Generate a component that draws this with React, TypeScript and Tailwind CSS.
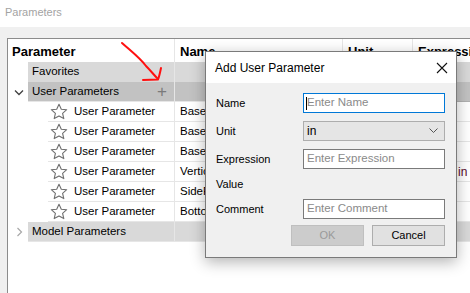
import React from 'react';

const font = { fontFamily: '"Liberation Sans", Arial, sans-serif' };

function Star() {
  return (
    <svg width="18" height="17" viewBox="0 0 18 17" className="shrink-0">
      <path
        d="M9 1.2l2.3 5 5.4.5-4.1 3.6 1.2 5.3L9 12.9l-4.8 2.7 1.2-5.3L1.3 6.7l5.4-.5z"
        fill="none"
        stroke="#6e6e6e"
        strokeWidth="1.1"
        strokeLinejoin="round"
      />
    </svg>
  );
}

const children = [
  { name: 'BasePlate', expr: '' },
  { name: 'BaseFlange', expr: '' },
  { name: 'BaseFoot', expr: '' },
  { name: 'VerticalRail', expr: 'in' },
  { name: 'SidePanel', expr: '' },
  { name: 'BottomPlate', expr: '' },
];

function GroupRow({ label, bg, open, plus }: { label: string; bg: string; open?: boolean; plus?: boolean }) {
  return (
    <div className="flex h-[20px]">
      <div className="w-[20px] flex items-center justify-center pl-[2px]">
        {open ? (
          <svg width="10" height="7" viewBox="0 0 10 7"><path d="M1 1.5l4 4 4-4" fill="none" stroke="#404040" strokeWidth="1.3" /></svg>
        ) : (
          <svg width="7" height="10" viewBox="0 0 7 10"><path d="M1.5 1l4 4-4 4" fill="none" stroke="#a8a8a8" strokeWidth="1.2" /></svg>
        )}
      </div>
      <div className={`w-[147px] flex items-center pl-[4px] pr-[7px] border-r border-[#e6e6e6] border-b ${bg}`}>
        <span className="flex-1 text-[11.5px] text-black">{label}</span>
        {plus && <span className="text-[17px] leading-none text-[#7a7a7a] font-light">+</span>}
      </div>
      <div className={`w-[168px] border-r border-[#e6e6e6] border-b ${bg}`} />
      <div className={`w-[70px] border-r border-[#e6e6e6] border-b ${bg}`} />
      <div className={`flex-1 border-b ${bg}`} />
    </div>
  );
}

export default function App() {
  return (
    <div className="relative w-[470px] h-[293px] overflow-hidden bg-white flex flex-col" style={font}>
      <div className="h-[27px] pl-[5px] pt-[4px] text-[11px] text-[#a3a3a3]">Parameters</div>
      <div className="flex-1 bg-[#f0f0f0] pt-[11px] pl-[7px] flex flex-col">
        <div className="flex-1 bg-white border-l border-t border-[#8c8c8c]">
          <div className="flex h-[23px] text-[13px] font-bold text-black">
            <div className="w-[167px] pl-[4px] pt-[3px] border-r border-[#e6e6e6]">Parameter</div>
            <div className="w-[168px] pl-[5px] pt-[3px] border-r border-[#e6e6e6]">Name</div>
            <div className="w-[70px] pl-[5px] pt-[3px] border-r border-[#e6e6e6]">Unit</div>
            <div className="flex-1 pl-[5px] pt-[3px] whitespace-nowrap overflow-hidden">Expression</div>
          </div>
          <div className="flex h-[20px]">
            <div className="w-[20px]" />
            <div className="flex-1">
              <div className="flex h-[20px] bg-[#d9d9d9]">
                <div className="w-[147px] flex items-center pl-[4px] border-r border-[#e6e6e6] text-[11.5px]">Favorites</div>
                <div className="w-[168px] border-r border-[#e6e6e6]" />
                <div className="w-[70px] border-r border-[#e6e6e6]" />
                <div className="flex-1" />
              </div>
            </div>
          </div>
          <GroupRow label="User Parameters" bg="bg-[#c2c2c2] border-[#b0b0b0]" open plus />
          {children.map((c) => (
            <div key={c.name} className="flex h-[20px]">
              <div className="w-[40px]" />
              <div className="w-[127px] flex items-center gap-[6px] pl-[2px] border-r border-b border-[#e6e6e6]">
                <Star />
                <span className="text-[11.5px] text-black">User Parameter</span>
              </div>
              <div className="w-[168px] flex items-center pl-[5px] border-r border-b border-[#e6e6e6] text-[11.5px] text-black whitespace-nowrap overflow-hidden">
                {c.name}
              </div>
              <div className="w-[70px] border-r border-b border-[#e6e6e6]" />
              <div className="flex-1 flex items-center pl-[45px] border-b border-[#e6e6e6] text-[12px] text-[#5a0a2a]">{c.expr}</div>
            </div>
          ))}
          <GroupRow label="Model Parameters" bg="bg-[#d9d9d9] border-[#e6e6e6]" />
        </div>
      </div>

      <svg className="absolute left-0 top-0 pointer-events-none" width="470" height="293">
        <path d="M122 43 C132 52 140 58 146 66 C151 71 154 75 158 79" fill="none" stroke="#ff1010" strokeWidth="2" strokeLinecap="round" />
        <path d="M143 80 L158 79.5 M161 68 C160 73 159 77 158 79.5" fill="none" stroke="#ff1010" strokeWidth="2" strokeLinecap="round" />
      </svg>

      <div className="absolute left-[205px] top-[51px] w-[252px] h-[207px] border border-[#7a7a7a] bg-[#f0f0f0] shadow-[0_4px_14px_rgba(0,0,0,0.3)] flex flex-col">
        <div className="h-[31px] bg-white flex items-center pl-[9px] pr-[8px]">
          <span className="flex-1 text-[12px] text-black">Add User Parameter</span>
          <svg width="12" height="12" viewBox="0 0 12 12"><path d="M1 1l10 10M11 1L1 11" stroke="#111" strokeWidth="1.1" /></svg>
        </div>
        <div className="flex flex-col pl-[10px] pr-[11px] pt-[10px] text-[11px] text-black">
          <div className="flex items-center h-[20px]">
            <span className="w-[87px]">Name</span>
            <div className="flex-1 h-[20px] border border-[#0078d7] bg-white flex items-center pl-[2px] text-[11.5px]">
              <span className="w-px h-[13px] bg-black" />
              <span className="text-[#8a8a8a]">Enter Name</span>
            </div>
          </div>
          <div className="flex items-center h-[20px] mt-[8px]">
            <span className="w-[87px]">Unit</span>
            <div className="flex-1 h-[20px] border border-[#adadad] bg-[#e5e5e5] flex items-center pl-[3px] pr-[6px] text-[12px]">
              <span className="flex-1">in</span>
              <svg width="9" height="6" viewBox="0 0 9 6"><path d="M0.5 0.5l4 4 4-4" fill="none" stroke="#555" strokeWidth="1" /></svg>
            </div>
          </div>
          <div className="flex items-center h-[20px] mt-[8px]">
            <span className="w-[87px]">Expression</span>
            <div className="flex-1 h-[20px] border border-[#7a7a7a] bg-white flex items-center pl-[3px] text-[11.5px] text-[#8a8a8a]">Enter Expression</div>
          </div>
          <div className="h-[20px] flex items-center mt-[5px]">Value</div>
          <div className="flex items-center h-[20px] mt-[5px]">
            <span className="w-[87px]">Comment</span>
            <div className="flex-1 h-[20px] border border-[#7a7a7a] bg-white flex items-center pl-[3px] text-[11.5px] text-[#8a8a8a]">Enter Comment</div>
          </div>
          <div className="flex justify-end gap-[8px] mt-[6px]">
            <div className="w-[73px] h-[21px] bg-[#cccccc] border border-[#bfbfbf] flex items-center justify-center text-[#9a9a9a]">OK</div>
            <div className="w-[73px] h-[21px] bg-[#e1e1e1] border border-[#adadad] flex items-center justify-center">Cancel</div>
          </div>
        </div>
      </div>
    </div>
  );
}
